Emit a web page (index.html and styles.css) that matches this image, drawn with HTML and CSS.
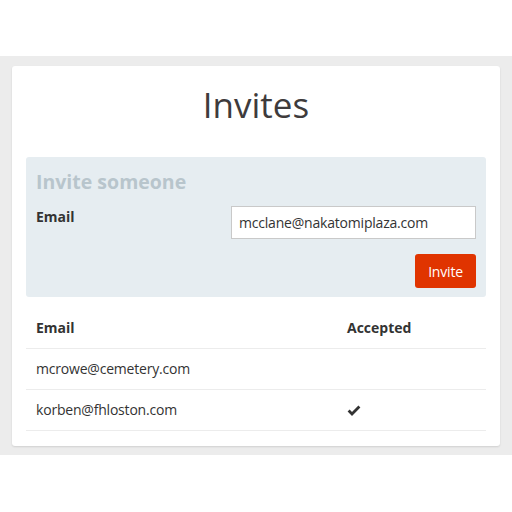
FILE: index.html
```html
<!DOCTYPE html>
<html>
<head>
<meta charset="utf-8">
<link rel="stylesheet" href="styles.css">
</head>
<body>
<div class="page">
  <div class="card">
    <h1 class="title">Invites</h1>
    <div class="panel">
      <h2 class="panel-title">Invite someone</h2>
      <div class="form-row">
        <label class="label">Email</label>
        <div class="input">mcclane@nakatomiplaza.com</div>
      </div>
      <div class="actions">
        <button class="btn">Invite</button>
      </div>
    </div>
    <div class="table">
      <div class="row head">
        <div class="c1">Email</div>
        <div class="c2">Accepted</div>
      </div>
      <div class="row">
        <div class="c1">mcrowe@cemetery.com</div>
        <div class="c2"></div>
      </div>
      <div class="row">
        <div class="c1">korben@fhloston.com</div>
        <div class="c2"><svg class="check" width="14" height="11" viewBox="0 0 14 11"><path d="M1.6 5.6 L5 9 L12.4 1.6" fill="none" stroke="#333" stroke-width="2.8"/></svg></div>
      </div>
    </div>
  </div>
</div>
</body>
</html>
```
FILE: styles.css
```css
html, body { margin: 0; padding: 0; background: #fff; }
body { font-family: "Open Sans", "Liberation Sans", sans-serif; color: #333; }
.page {
  margin-top: 56px;
  background: #ececec;
  padding: 10px 12px 9px;
}
.card {
  background: #fff;
  border-radius: 3px;
  box-shadow: 0 1px 2px rgba(0,0,0,0.12);
  padding: 17px 14px 15px;
}
.title {
  margin: 0 0 31px;
  font-size: 35px;
  font-weight: 400;
  line-height: 43px;
  text-align: center;
  color: #3e3b3c;
}
.panel {
  background: #e6edf1;
  border-radius: 3px;
  padding: 11px 10px 9px;
}
.panel-title {
  margin: 0 0 11px;
  font-size: 19.5px;
  font-weight: 700;
  line-height: 27px;
  color: #b8c5cc;
}
.form-row { display: flex; align-items: flex-start; }
.label {
  flex: 1;
  font-size: 14px;
  font-weight: 700;
  line-height: 20px;
  padding-top: 1px;
  color: #333;
}
.input {
  width: 245px;
  height: 33px;
  box-sizing: border-box;
  border: 1px solid #c9c9c9;
  background: #fff;
  font-size: 14px;
  letter-spacing: -0.2px;
  line-height: 31px;
  padding-left: 7px;
  color: #333;
}
.actions { display: flex; justify-content: flex-end; margin-top: 15px; }
.btn {
  width: 61px;
  height: 34px;
  border: 0;
  border-radius: 3px;
  background: #e03400;
  color: #fff;
  font-family: "Open Sans", "Liberation Sans", sans-serif;
  font-size: 14px;
  letter-spacing: -0.2px;
  padding: 0;
}
.table { margin-top: 11px; }
.row {
  display: flex;
  padding: 10px 10px;
  line-height: 20px;
  font-size: 14px;
  letter-spacing: -0.2px;
  border-bottom: 1px solid #ececec;
}
.row.head { font-size: 14px; font-weight: 700; letter-spacing: 0; }
.c1 { width: 311px; }
.c2 { flex: 1; }
.check { display: block; margin-top: 5px; }
```
